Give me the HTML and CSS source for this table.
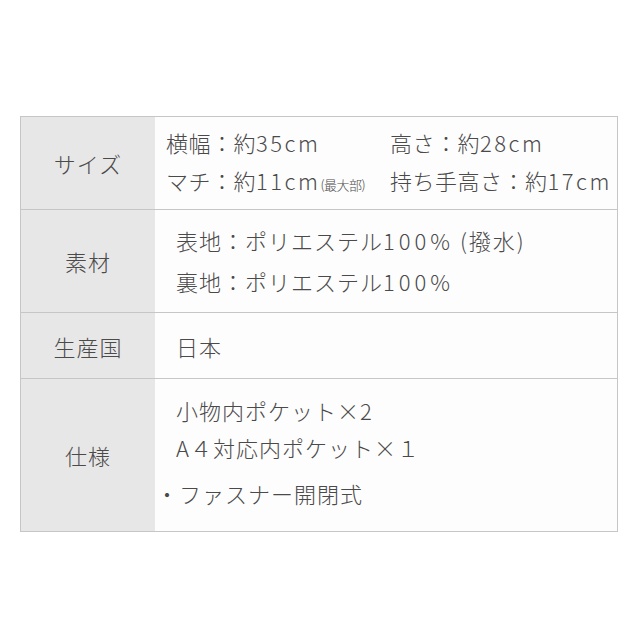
FILE: index.html
```html
<!DOCTYPE html>
<html lang="ja">
<head>
<meta charset="utf-8">
<link rel="stylesheet" href="styles.css">
</head>
<body>
<div class="spec">
  <div class="row row-size">
    <div class="label">サイズ</div>
    <div class="value">
      <div class="size-grid">
        <span>横幅：約<span class="num">35cm</span></span>
        <span>高さ：約<span class="num">28cm</span></span>
        <span>マチ：約<span class="num">11cm</span><small>(最大部)</small></span>
        <span>持ち手高さ：約<span class="num">17cm</span></span>
      </div>
    </div>
  </div>
  <div class="row row-material">
    <div class="label">素材</div>
    <div class="value indent">
      <div class="line">表地：ポリエステル<span class="num">100%</span> <span class="paren">(撥水)</span></div>
      <div class="line">裏地：ポリエステル<span class="num">100%</span></div>
    </div>
  </div>
  <div class="row row-origin">
    <div class="label">生産国</div>
    <div class="value indent">
      <div class="line">日本</div>
    </div>
  </div>
  <div class="row row-spec">
    <div class="label">仕様</div>
    <div class="value indent">
      <div class="line">小物内ポケット×2</div>
      <div class="line">A４対応内ポケット×１</div>
      <div class="line bullet">・ファスナー開閉式</div>
    </div>
  </div>
</div>
</body>
</html>
```
FILE: styles.css
```css
html, body {
  margin: 0;
  padding: 0;
  background: #ffffff;
}
body {
  padding: 116px 22px 0 20px;
  font-family: "Noto Sans CJK JP", "Noto Sans", sans-serif;
  font-weight: 300;
  color: #4a4a4a;
  font-size: 22px;
}
.spec {
  width: 598px;
  border: 1px solid #c6c6c6;
  box-sizing: border-box;
}
.row {
  display: grid;
  grid-template-columns: 134px 1fr;
  border-top: 1px solid #c6c6c6;
}
.row:first-child {
  border-top: none;
}
.label {
  background: #e8e7e8;
  display: flex;
  align-items: center;
  justify-content: center;
  letter-spacing: 1px;
}
.value {
  background: #fefdfd;
  display: flex;
  flex-direction: column;
  justify-content: center;
  white-space: nowrap;
}
.row-size { height: 92px; }
.row-material { height: 102px; }
.row-origin { height: 65px; }
.row-spec { height: 152px; }

.size-grid {
  display: grid;
  grid-template-columns: 224px 1fr;
  row-gap: 0;
  padding-left: 11px;
  line-height: 38px;
  letter-spacing: 0.5px;
}
.size-grid .num {
  letter-spacing: 2.5px;
}
small {
  font-size: 13px;
  letter-spacing: -0.5px;
}
.indent {
  padding-left: 21px;
  letter-spacing: 1px;
}
.indent .num {
  letter-spacing: 4px;
}
.paren {
  letter-spacing: 2px;
}
.row-material .line {
  line-height: 41px;
}
.row-origin .line {
  line-height: 38px;
}
.row-spec .value {
  justify-content: flex-start;
  padding-top: 13px;
}
.row-spec .line {
  line-height: 37px;
}
.row-spec .bullet {
  margin-top: 9px;
  margin-left: -20px;
}
```
